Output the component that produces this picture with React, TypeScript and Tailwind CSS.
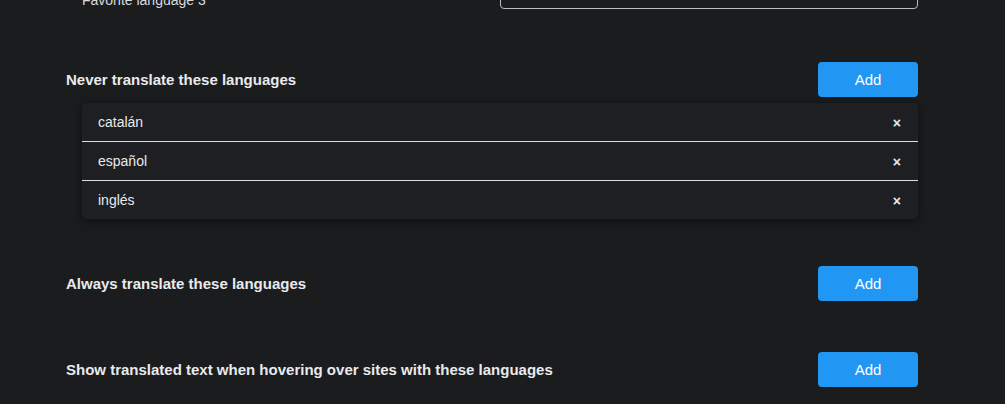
const neverList = ["catalán", "español", "inglés"];

const AddButton = () => (
  <button className="h-[35px] w-[100px] rounded-[4px] bg-[#2196f3] pt-[2px] text-[15px] text-white">
    Add
  </button>
);

const SectionHead = ({ title }: { title: string }) => (
  <div className="flex items-center justify-between">
    <h2 className="pt-[2px] text-[15px] font-bold text-[#e8eaed]">{title}</h2>
    <AddButton />
  </div>
);

export default function App() {
  return (
    <div
      className="h-[404px] w-full overflow-hidden bg-[#1b1c1e] pl-[66px] pr-[87px] text-[#e8eaed]"
      style={{ fontFamily: '"Liberation Sans", Arial, sans-serif' }}
    >
      {/* last favorite language row, cut at the top */}
      <div className="-mt-[27px] flex items-end justify-between pl-4">
        <span className="mb-[1px] text-[14px] leading-[16px] text-[#d8dadd]">Favorite language 3</span>
        <div className="h-[36px] w-[418px] rounded-[4px] border border-[#b9bbbe]" />
      </div>

      <div className="mt-[53px]">
        <SectionHead title="Never translate these languages" />
        <div className="ml-4 mt-[6px] rounded-[4px] bg-[#1e1f22] shadow-[0_2px_10px_rgba(0,0,0,0.55)]">
          {neverList.map((lang, i) => (
            <div
              key={lang}
              className={
                i < neverList.length - 1
                  ? "flex h-[39px] items-center justify-between border-b border-[#dcdcdc] pl-4 pr-[17px] pt-[1px]"
                  : "flex h-[38px] items-center justify-between pl-4 pr-[17px] pt-[1px]"
              }
            >
              <span className="text-[14px] text-[#e8eaed]">{lang}</span>
              <span className="text-[14px] font-bold leading-none text-[#e8eaed]">×</span>
            </div>
          ))}
        </div>
      </div>

      <div className="mt-[47px]">
        <SectionHead title="Always translate these languages" />
      </div>

      <div className="mt-[51px]">
        <SectionHead title="Show translated text when hovering over sites with these languages" />
      </div>
    </div>
  );
}
